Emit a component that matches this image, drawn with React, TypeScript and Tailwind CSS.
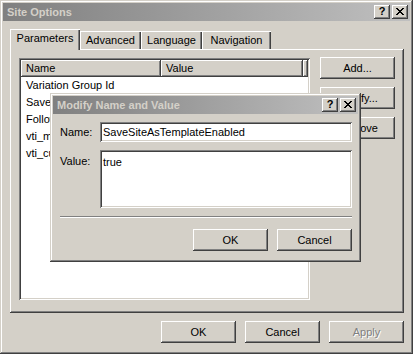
import React from 'react';

const raised = 'shadow-[inset_-1px_-1px_#404040,inset_1px_1px_#ffffff,inset_-2px_-2px_#808080]';
const frame = 'shadow-[inset_-1px_-1px_#404040,inset_1px_1px_#d4d0c8,inset_-2px_-2px_#808080,inset_2px_2px_#ffffff]';
const sunken = 'shadow-[inset_1px_1px_#808080,inset_-1px_-1px_#ffffff,inset_2px_2px_#404040,inset_-2px_-2px_#d4d0c8]';

function CloseGlyph() {
    return (
        <svg width="8" height="7" viewBox="0 0 8 7" shapeRendering="crispEdges">
            <path d="M0 0h2v1h1v1h2v-1h1v-1h2v1h-1v1h-1v1h-1v1h1v1h1v1h1v1h-2v-1h-1v-1h-2v1h-1v1h-2v-1h1v-1h1v-1h1v-1h-1v-1h-1v-1h-1z" fill="#000" />
        </svg>
    );
}

function TitleBar({ title }: { title: string }) {
    return (
        <div className="h-[18px] flex items-center justify-between bg-gradient-to-r from-[#808080] to-[#c0c0c0] pl-[4px] pr-[2px]">
            <span className="text-[11px] font-bold text-[#d4d0c8] leading-none">{title}</span>
            <div className="flex gap-[2px]">
                <div className={`w-[16px] h-[14px] bg-[#d4d0c8] ${raised} flex items-center justify-center text-[11px] font-bold leading-none pb-[1px]`}>?</div>
                <div className={`w-[16px] h-[14px] bg-[#d4d0c8] ${raised} flex items-center justify-center pb-[1px]`}>
                    <CloseGlyph />
                </div>
            </div>
        </div>
    );
}

function Button({ label, disabled = false }: { label: string; disabled?: boolean }) {
    return (
        <div className={`w-[75px] h-[22px] bg-[#d4d0c8] ${raised} flex items-center justify-center text-[11px] ${disabled ? 'text-[#808080] [text-shadow:1px_1px_#ffffff]' : 'text-black'}`}>
            {label}
        </div>
    );
}

const rows = [
    { name: 'Variation Group Id', value: '' },
    { name: 'SaveSiteAsTemplateEnabled', value: 'true' },
    { name: 'FollowLinkEnabled', value: 'true' },
    { name: 'vti_mastertemplate', value: '' },
    { name: 'vti_customuploadpage', value: '' },
];

const tabs = [
    { label: 'Advanced', w: 'w-[61px]' },
    { label: 'Language', w: 'w-[61px]' },
    { label: 'Navigation', w: 'w-[69px]' },
];

export default function App() {
    return (
        <div
            className={`relative w-[413px] h-[354px] bg-[#d4d0c8] ${frame} p-[3px] flex flex-col text-black overflow-hidden`}
            style={{ fontFamily: '"Liberation Sans", Arial, sans-serif' }}
        >
            <TitleBar title="Site Options" />

            <div className="flex-1 flex flex-col pt-[8px] pl-[7px] pr-[6px] pb-[8px]">
                {/* tab strip */}
                <div className="flex items-end h-[20px]">
                    <div className="relative z-10 w-[70px] h-[21px] mb-[-1px] bg-[#d4d0c8] shadow-[inset_1px_1px_#ffffff,inset_-1px_0_#404040,inset_-2px_0_#808080] flex items-center justify-center text-[11px] pb-[2px]">
                        Parameters
                    </div>
                    {tabs.map((t) => (
                        <div
                            key={t.label}
                            className={`${t.w} h-[18px] bg-[#d4d0c8] shadow-[inset_1px_1px_#ffffff,inset_-1px_0_#404040,inset_-2px_0_#808080] flex items-center justify-center text-[11px]`}
                        >
                            {t.label}
                        </div>
                    ))}
                </div>

                {/* tab panel */}
                <div className={`h-[264px] bg-[#d4d0c8] ${raised} flex gap-[10px] pl-[9px] pt-[9px]`}>
                    <div className={`w-[291px] h-[242px] bg-white ${sunken} p-[2px] flex flex-col`}>
                        <div className="flex h-[17px]">
                            <div className={`w-[140px] ${raised} bg-[#d4d0c8] text-[11px] pl-[5px] flex items-center`}>Name</div>
                            <div className={`w-[142px] ${raised} bg-[#d4d0c8] text-[11px] pl-[5px] flex items-center`}>Value</div>
                            <div className={`flex-1 ${raised} bg-[#d4d0c8]`} />
                        </div>
                        {rows.map((r) => (
                            <div key={r.name} className="flex h-[17px] items-center text-[11px]">
                                <span className="w-[140px] pl-[5px] truncate">{r.name}</span>
                                <span className="pl-[5px]">{r.value}</span>
                            </div>
                        ))}
                    </div>
                    <div className="flex flex-col gap-[8px] mt-[-1px]">
                        <Button label="Add..." />
                        <Button label="Modify..." />
                        <Button label="Remove" />
                    </div>
                </div>

                {/* dialog buttons */}
                <div className="flex justify-end gap-[9px] mt-[8px]">
                    <Button label="OK" />
                    <Button label="Cancel" />
                    <Button label="Apply" disabled />
                </div>
            </div>

            {/* child dialog */}
            <div className={`absolute left-[50px] top-[93px] w-[311px] h-[169px] bg-[#d4d0c8] ${frame} p-[3px] flex flex-col`}>
                <TitleBar title="Modify Name and Value" />
                <div className="flex flex-col pt-[8px] pl-[7px] pr-[6px]">
                    <div className="flex items-center h-[20px]">
                        <span className="w-[40px] text-[11px]">Name:</span>
                        <div className={`flex-1 h-[20px] bg-white ${sunken} flex items-center px-[3px] text-[11px]`}>
                            SaveSiteAsTemplateEnabled
                        </div>
                    </div>
                    <div className="flex mt-[8px]">
                        <span className="w-[40px] text-[11px] pt-[3px]">Value:</span>
                        <div className={`flex-1 h-[58px] bg-white ${sunken} px-[3px] pt-[4px] text-[11px]`}>true</div>
                    </div>
                    <div className="mt-[8px] h-[2px] border-t border-t-[#808080] border-b border-b-white" />
                    <div className="flex justify-end gap-[9px] mt-[11px]">
                        <Button label="OK" />
                        <Button label="Cancel" />
                    </div>
                </div>
            </div>
        </div>
    );
}
